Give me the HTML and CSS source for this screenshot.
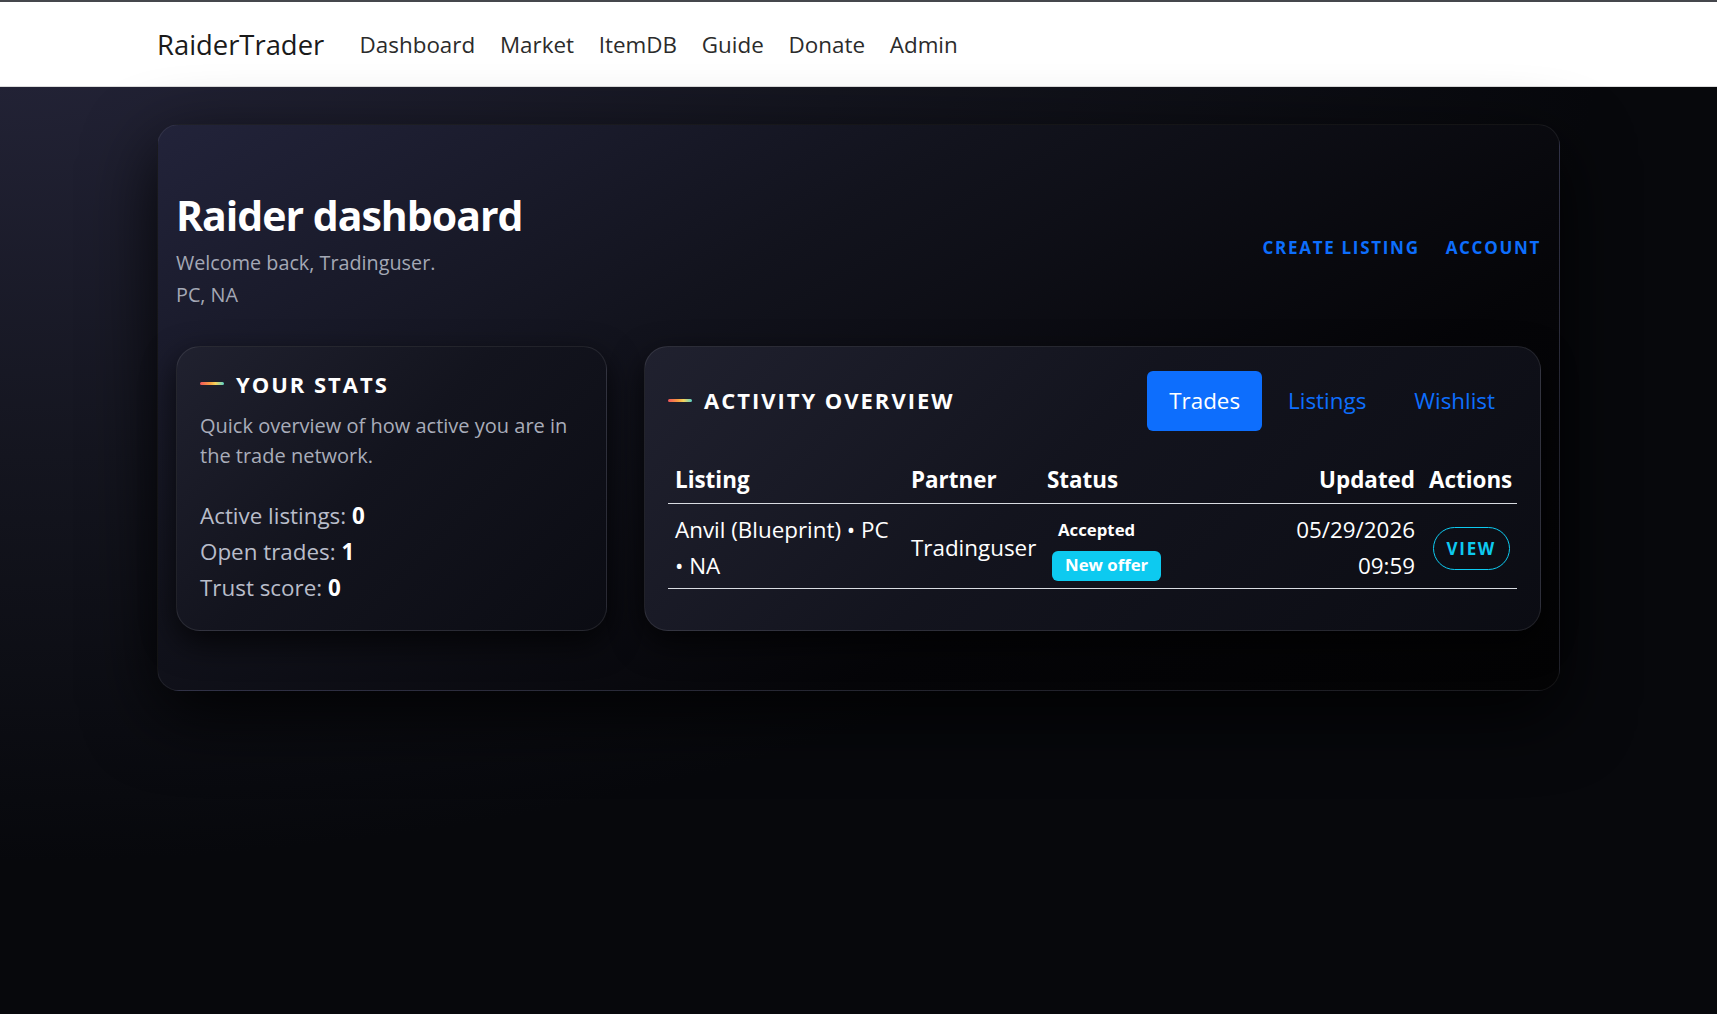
FILE: index.html
```html
<!DOCTYPE html>
<html lang="en">
<head>
    <meta charset="UTF-8">
    <meta name="viewport" content="width=device-width, initial-scale=1.0">
    <title>RaiderTrader - Dashboard</title>
    <link rel="stylesheet" href="styles.css">
</head>
<body>
    <nav class="topbar">
        <div class="topbar-inner">
            <a class="brand" href="#">RaiderTrader</a>
            <ul class="nav-links">
                <li><a href="#">Dashboard</a></li>
                <li><a href="#">Market</a></li>
                <li><a href="#">ItemDB</a></li>
                <li><a href="#">Guide</a></li>
                <li><a href="#">Donate</a></li>
                <li><a href="#">Admin</a></li>
            </ul>
        </div>
    </nav>

    <main class="page">
        <section class="shell">
            <header class="shell-head">
                <div>
                    <h1>Raider dashboard</h1>
                    <p class="muted">Welcome back, Tradinguser.</p>
                    <p class="muted">PC, NA</p>
                </div>
                <div class="head-actions">
                    <a class="text-btn" href="#">Create listing</a>
                    <a class="text-btn" href="#">Account</a>
                </div>
            </header>

            <div class="panels">
                <article class="panel">
                    <h2 class="panel-title"><span class="accent"></span>Your stats</h2>
                    <p class="panel-desc">Quick overview of how active you are in the trade network.</p>
                    <ul class="stat-list">
                        <li>Active listings: <strong>0</strong></li>
                        <li>Open trades: <strong>1</strong></li>
                        <li>Trust score: <strong>0</strong></li>
                    </ul>
                </article>

                <article class="panel">
                    <div class="panel-top">
                        <h2 class="panel-title"><span class="accent"></span>Activity overview</h2>
                        <ul class="tabs">
                            <li><a class="tab active" href="#">Trades</a></li>
                            <li><a class="tab" href="#">Listings</a></li>
                            <li><a class="tab" href="#">Wishlist</a></li>
                        </ul>
                    </div>
                    <table class="trades">
                        <colgroup>
                            <col class="c-listing">
                            <col class="c-partner">
                            <col>
                            <col class="c-updated">
                            <col class="c-actions">
                        </colgroup>
                        <thead>
                            <tr>
                                <th>Listing</th>
                                <th>Partner</th>
                                <th>Status</th>
                                <th class="right">Updated</th>
                                <th>Actions</th>
                            </tr>
                        </thead>
                        <tbody>
                            <tr>
                                <td>Anvil (Blueprint) &bull; PC &bull; NA</td>
                                <td class="nowrap">Tradinguser</td>
                                <td class="status">
                                    <div class="badge-stack">
                                        <span class="badge plain">Accepted</span>
                                        <span class="badge info">New offer</span>
                                    </div>
                                </td>
                                <td class="right">05/29/2026 09:59</td>
                                <td class="right"><a class="pill-btn" href="#">View</a></td>
                            </tr>
                        </tbody>
                    </table>
                </article>
            </div>
        </section>
    </main>
</body>
</html>
```

FILE: styles.css
```css
html, body {
    min-height: 100%;
}
body {
    margin: 0;
    min-height: 100vh;
    font-family: "Open Sans", "Noto Sans", sans-serif;
    font-size: 22.4px;
    line-height: 1.6;
    color: #fff;
    background-color: #07080c;
    background-image: radial-gradient(ellipse 110% 100% at 0% 0%, #25253a 0%, #14151f 45%, #07080c 85%);
}
a {
    text-decoration: none;
}
ul {
    list-style: none;
    margin: 0;
    padding: 0;
}
p {
    margin: 0;
}

/* top navigation */
.topbar {
    background: #fff;
    border-top: 2px solid #45474c;
    border-bottom: 1px solid #dcdcdc;
    height: 84px;
}
.topbar-inner {
    max-width: 1403px;
    margin: 0 auto;
    height: 100%;
    padding-top: 2px;
    box-sizing: border-box;
    display: flex;
    align-items: center;
}
.brand {
    font-size: 27.4px;
    color: #1a1a1a;
    margin-right: 23px;
}
.nav-links {
    display: flex;
}
.nav-links a {
    display: block;
    padding: 0 12.4px;
    font-size: 22.4px;
    color: #2b2b2b;
}

/* dashboard shell */
.page {
    max-width: 1403px;
    margin: 37px auto 0;
}
.shell {
    border-radius: 22px;
    border: 1px solid rgba(255, 255, 255, 0.07);
    background: linear-gradient(150deg, #22233a 0%, #12131d 35%, #050508 70%, #030304 100%);
    box-shadow: 0 24px 70px rgba(0, 0, 0, 0.85);
    padding: 64px 18px 59px;
}
.shell-head {
    display: flex;
    justify-content: space-between;
    align-items: center;
    margin-bottom: 35px;
}
.shell-head h1 {
    margin: 0 0 5px;
    font-size: 41px;
    line-height: 1.3;
    font-weight: 700;
    letter-spacing: -1px;
}
.muted {
    font-size: 19.8px;
    color: #a4a8b5;
}
.head-actions {
    display: flex;
    gap: 26px;
    margin-bottom: 4px;
}
.text-btn {
    color: #0d6efd;
    font-size: 17px;
    font-weight: 700;
    letter-spacing: 0.1em;
    text-transform: uppercase;
}

/* cards */
.panels {
    display: grid;
    grid-template-columns: 431px 1fr;
    gap: 37px;
}
.panel {
    border-radius: 24px;
    border: 1px solid rgba(255, 255, 255, 0.09);
    background: linear-gradient(135deg, #20212f 0%, #13141e 45%, #0b0c13 100%);
    box-shadow: 0 12px 32px rgba(0, 0, 0, 0.7);
    padding: 24px 23px 23px;
}
.panel-title {
    margin: 0;
    display: flex;
    align-items: center;
    gap: 12px;
    font-size: 22px;
    line-height: 1.2;
    font-weight: 700;
    letter-spacing: 0.09em;
    text-transform: uppercase;
}
.accent {
    width: 24px;
    height: 3px;
    border-radius: 2px;
    background: linear-gradient(90deg, #f2545b, #f7a440 45%, #f4d35e 65%, #58d3c9);
}
.panel-desc {
    margin-top: 14px;
    font-size: 20px;
    line-height: 1.52;
    color: #a9adba;
}
.stat-list {
    margin-top: 26px;
    color: #b9bdca;
}
.stat-list strong {
    color: #fff;
}

/* activity card */
.panel-top {
    display: flex;
    justify-content: space-between;
    align-items: center;
}
.tabs {
    display: flex;
    gap: 4px;
}
.tab {
    display: block;
    padding: 12px 22px;
    line-height: 36px;
    border-radius: 6px;
    color: #0d6efd;
}
.tab.active {
    background: #0d6efd;
    color: #fff;
}

.trades {
    width: 100%;
    margin: 25px 0 18px;
    border-collapse: collapse;
    table-layout: fixed;
}
.c-listing { width: 236px; }
.c-partner { width: 136px; }
.c-updated { width: 142px; }
.c-actions { width: 95px; }
.trades th,
.trades td {
    padding: 6px 7px;
    text-align: left;
    vertical-align: middle;
    border-bottom: 1px solid #d9dce2;
}
.trades td {
    padding: 8px 7px 4px;
}
.trades th {
    font-weight: 700;
}
.trades .right {
    text-align: right;
}
.trades .nowrap {
    white-space: nowrap;
}
.trades td.status {
    padding-left: 12px;
}
.badge-stack {
    display: flex;
    flex-direction: column;
    align-items: flex-start;
    gap: 5px;
}
.badge {
    display: inline-block;
    font-size: 16.8px;
    font-weight: 700;
    line-height: 1;
    color: #fff;
    border-radius: 6px;
}
.badge.plain {
    padding: 6px 6px 7px;
}
.badge.info {
    padding: 6px 13px 7px;
    background: #0dcaf0;
}
.pill-btn {
    display: inline-block;
    padding: 8px 13px;
    line-height: 25px;
    font-size: 17px;
    font-weight: 700;
    letter-spacing: 0.1em;
    text-transform: uppercase;
    color: #0dcaf0;
    border: 1px solid #0dcaf0;
    border-radius: 999px;
}
```
